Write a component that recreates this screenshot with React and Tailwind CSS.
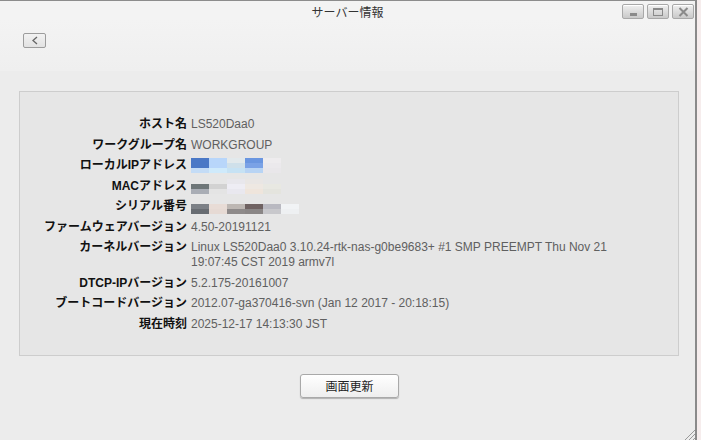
import React from "react";

const F = { fontFamily: '"Liberation Sans", Arial, "Noto Sans CJK JP", sans-serif' };

function Mosaic({ cols }) {
  return (
    <div className="flex h-[15px] overflow-visible">
      {cols.map((c, i) => (
        <div key={i} className="flex w-[18px] flex-col">
          {c.map((col, j) => (
            <div key={j} className="h-[5px] w-full" style={{ backgroundColor: col }} />
          ))}
        </div>
      ))}
    </div>
  );
}

const ipCols = [
  ["#4a78c6", "#4a78c6", "#c4dcf6"],
  ["#b8d6fa", "#b8d6fa", "#cfeafb"],
  ["#e2e9ec", "#cfe0ea", "#c6e2f4"],
  ["#6a96e0", "#7aa2e6", "#b8d4f4"],
  ["#eeecee", "#ebe9ec", "#e9e7ea"],
];
const macCols = [
  ["#e6e6e6", "#6e7678", "#a9adb5"],
  ["#e6e6e6", "#d2d2d2", "#e4e4e4"],
  ["#e8e7ec", "#eeedf4", "#e9e8ef"],
  ["#e9e6e4", "#eee8e2", "#efe5dc"],
  ["#e6e6e6", "#e8e8e2", "#e4e4de"],
];
const serialCols = [
  ["#e6e6e6", "#7c8086", "#686c72"],
  ["#e6e6e6", "#e8dcd6", "#e6dad4"],
  ["#e6e6e6", "#bdb7b3", "#8e8a8a"],
  ["#e6e6e6", "#6f6262", "#8a8686"],
  ["#e6e6e6", "#b9b9c1", "#c8c8cc"],
  ["#e6e6e6", "#f1f3f5", "#eef0f2"],
];

const rows = [
  ["ホスト名", "LS520Daa0"],
  ["ワークグループ名", "WORKGROUP"],
  ["ローカルIPアドレス", <Mosaic cols={ipCols} />],
  ["MACアドレス", <Mosaic cols={macCols} />],
  ["シリアル番号", <Mosaic cols={serialCols} />],
  ["ファームウェアバージョン", "4.50-20191121"],
  ["カーネルバージョン", "Linux LS520Daa0 3.10.24-rtk-nas-g0be9683+ #1 SMP PREEMPT Thu Nov 21 19:07:45 CST 2019 armv7l"],
  ["DTCP-IPバージョン", "5.2.175-20161007"],
  ["ブートコードバージョン", "2012.07-ga370416-svn (Jan 12 2017 - 20:18:15)"],
  ["現在時刻", "2025-12-17 14:13:30 JST"],
];

function WinBtn({ children }) {
  return (
    <div className="flex h-[15px] w-[22px] items-center justify-center rounded-[2px] border border-[#a8a8a8] bg-gradient-to-b from-[#f0f0f0] to-[#c9c9c9] shadow-[inset_0_1px_0_#fff]">
      {children}
    </div>
  );
}

export default function App() {
  return (
    <div className="flex h-[440px] w-[701px] overflow-hidden bg-[#f6eded]" style={F}>
      <div className="flex h-full w-[697px] flex-col border-t border-r-2 border-t-[#8c8c8c] border-r-[#8a8a8a] bg-[#ececec]">
        {/* title bar */}
        <div className="grid h-[19px] grid-cols-[1fr_auto_1fr] items-center bg-[#f3f3f3]">
          <div />
          <div className="pt-[1px] text-[12px] leading-[15px] text-[#333]" style={{ fontFamily: '"Noto Sans CJK JP", sans-serif' }}>
            サーバー情報
          </div>
          <div className="flex justify-end gap-[3px] pr-[1px] pt-[2px]">
            <WinBtn>
              <div className="mt-[5px] h-[3px] w-[7px] bg-[#8a8a8a]" />
            </WinBtn>
            <WinBtn>
              <div className="h-[8px] w-[10px] border-[1.5px] border-t-[2px] border-[#8a8a8a]" />
            </WinBtn>
            <WinBtn>
              <svg width="11" height="10" viewBox="0 0 11 10">
                <path d="M1.5 1 L9.5 9 M9.5 1 L1.5 9" stroke="#8a8a8a" strokeWidth="2" />
              </svg>
            </WinBtn>
          </div>
        </div>
        {/* header */}
        <div className="h-[51px] bg-gradient-to-b from-[#f3f3f3] to-[#efefef] pl-[23px] pt-[13px]">
          <div className="flex h-[15px] w-[23px] items-center justify-center rounded-[2px] border border-[#9c9c9c] bg-gradient-to-b from-[#f2f2f2] to-[#e2e2e2]">
            <svg width="8" height="9" viewBox="0 0 8 9">
              <path d="M6 1 L2 4.5 L6 8" fill="none" stroke="#666" strokeWidth="1.3" />
            </svg>
          </div>
        </div>
        {/* body */}
        <div className="flex flex-1 flex-col items-start px-[19px] pt-[20px]">
          <div className="h-[265px] w-[660px] border border-[#cdcdcd] bg-[#e6e6e6] pt-[25px]">
            <div className="flex flex-col gap-[5.5px]">
              {rows.map(([label, value], i) => (
                <div key={i} className="flex text-[12px] leading-[15px]">
                  <div className="w-[167px] shrink-0 whitespace-nowrap text-right font-bold text-[#111]">{label}</div>
                  <div className="ml-[4px] w-[440px] text-[#606060]">{value}</div>
                </div>
              ))}
            </div>
          </div>
          <div className="mt-[18px] flex w-[660px] justify-center">
            <button className="ml-[1px] h-[24px] w-[99px] rounded-[3px] border border-[#a9a9a9] bg-gradient-to-b from-[#ffffff] to-[#eeeeee] text-[12px] text-[#222] shadow-[0_1px_1px_rgba(0,0,0,0.25)]" style={{ fontFamily: '"Noto Sans CJK JP", sans-serif' }}>
              画面更新
            </button>
          </div>
          <div className="flex-1" />
          <div className="flex w-full justify-end">
            <svg width="12" height="12" viewBox="0 0 12 12" className="-mr-[19px]">
              <path d="M12 2 L2 12 M12 6 L6 12 M12 10 L10 12" stroke="#9a9a9a" strokeWidth="1" />
            </svg>
          </div>
        </div>
      </div>
    </div>
  );
}
